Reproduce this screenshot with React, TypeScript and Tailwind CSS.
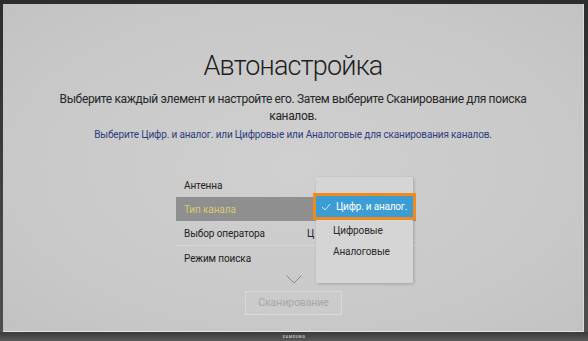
export default function App() {
  const font = { fontFamily: "Roboto, 'Open Sans', sans-serif" };
  return (
    <div
      className="w-[588px] h-[341px] flex flex-col bg-gradient-to-b from-[#2c2c2c] to-[#505050] overflow-hidden"
      style={font}
    >
      <div className="flex-1 flex pt-[4px] pl-[3px] pr-[4px]">
        <div className="flex-1 flex flex-col items-center bg-[radial-gradient(ellipse_at_center,#d0d0d0_0%,#c8c8c8_70%,#c2c2c2_100%)] border-r border-[#dcdcdc] border-b border-b-[#e4e4e4]">
          <h1 className="mt-[46px] text-[27px] font-light leading-[32px] tracking-[-0.8px] text-[#1e1e1e]">
            Автонастройка
          </h1>
          <p className="mt-[9px] text-[12px] leading-[17px] text-center text-[#262626] tracking-[-0.36px]">
            Выберите каждый элемент и настройте его. Затем выберите Сканирование для поиска
            <br />
            каналов.
          </p>
          <p className="mt-[3px] text-[10px] leading-[14px] text-[#2c3f7c] tracking-[-0.15px] whitespace-nowrap">
            Выберите Цифр. и аналог. или Цифровые или Аналоговые для сканирования каналов.
          </p>

          <div className="relative self-start ml-[173px] mt-[31px] w-[240px] text-[10px] tracking-[-0.1px] text-[#222]">
            <div className="h-[24px] flex items-center pl-[8px]">
              <span className="w-[123px]">Антенна</span>
            </div>
            <div className="h-[24px] flex items-center pl-[8px] bg-[#8f8f8f] text-[#d9c970]">
              <span className="w-[123px]">Тип канала</span>
            </div>
            <div className="h-[25px] flex items-center pl-[8px] border-b border-[#d6d6d6]">
              <span className="w-[123px]">Выбор оператора</span>
              <span>Ц</span>
            </div>
            <div className="h-[24px] flex items-center pl-[8px]">
              <span className="w-[123px]">Режим поиска</span>
            </div>

            <div className="absolute left-[140px] top-[4px] w-[97px] h-[106px] bg-[#d5d5d5] shadow-[1px_1px_3px_rgba(0,0,0,0.2)] flex flex-col pt-[47px] pl-[17px] gap-[8px] text-[10px] text-[#2a2a2a]">
              <span className="leading-[13px]">Цифровые</span>
              <span className="leading-[13px]">Аналоговые</span>
            </div>
            <div className="absolute left-[137px] top-[20px] w-[103px] h-[27px] border-[3px] border-[#f08a1e] bg-[#3b9dd4] flex items-center text-[10px] tracking-[-0.2px] text-white whitespace-nowrap">
              <svg width="10" height="8" viewBox="0 0 10 8" className="ml-[5px] mr-[5px] shrink-0">
                <path d="M1 4 L4 7 L9 1" fill="none" stroke="#d8ecf8" strokeWidth="1" />
              </svg>
              <span>Цифр. и аналог.</span>
            </div>
          </div>

          <svg width="16" height="9" viewBox="0 0 16 9" className="mt-[5px] ml-[2px]">
            <path d="M0.5 0.5 L8 8 L15.5 0.5" fill="none" stroke="#8a8a8a" strokeWidth="1" />
          </svg>

          <div className="mt-[7px] ml-[1px] w-[97px] h-[24px] border border-[#d9d9d9] bg-[#cbcbcb] flex items-center justify-center text-[10.5px] tracking-[-0.1px] text-[#a7a7a7]">
            Сканирование
          </div>
        </div>
      </div>
      <div className="h-[9px] flex items-center justify-center bg-gradient-to-b from-[#3a3a3a] to-[#5a5a5a]">
        <span className="text-[4px] leading-[4px] tracking-[0.5px] text-[#bdbdbd] font-bold">SAMSUNG</span>
      </div>
    </div>
  );
}
